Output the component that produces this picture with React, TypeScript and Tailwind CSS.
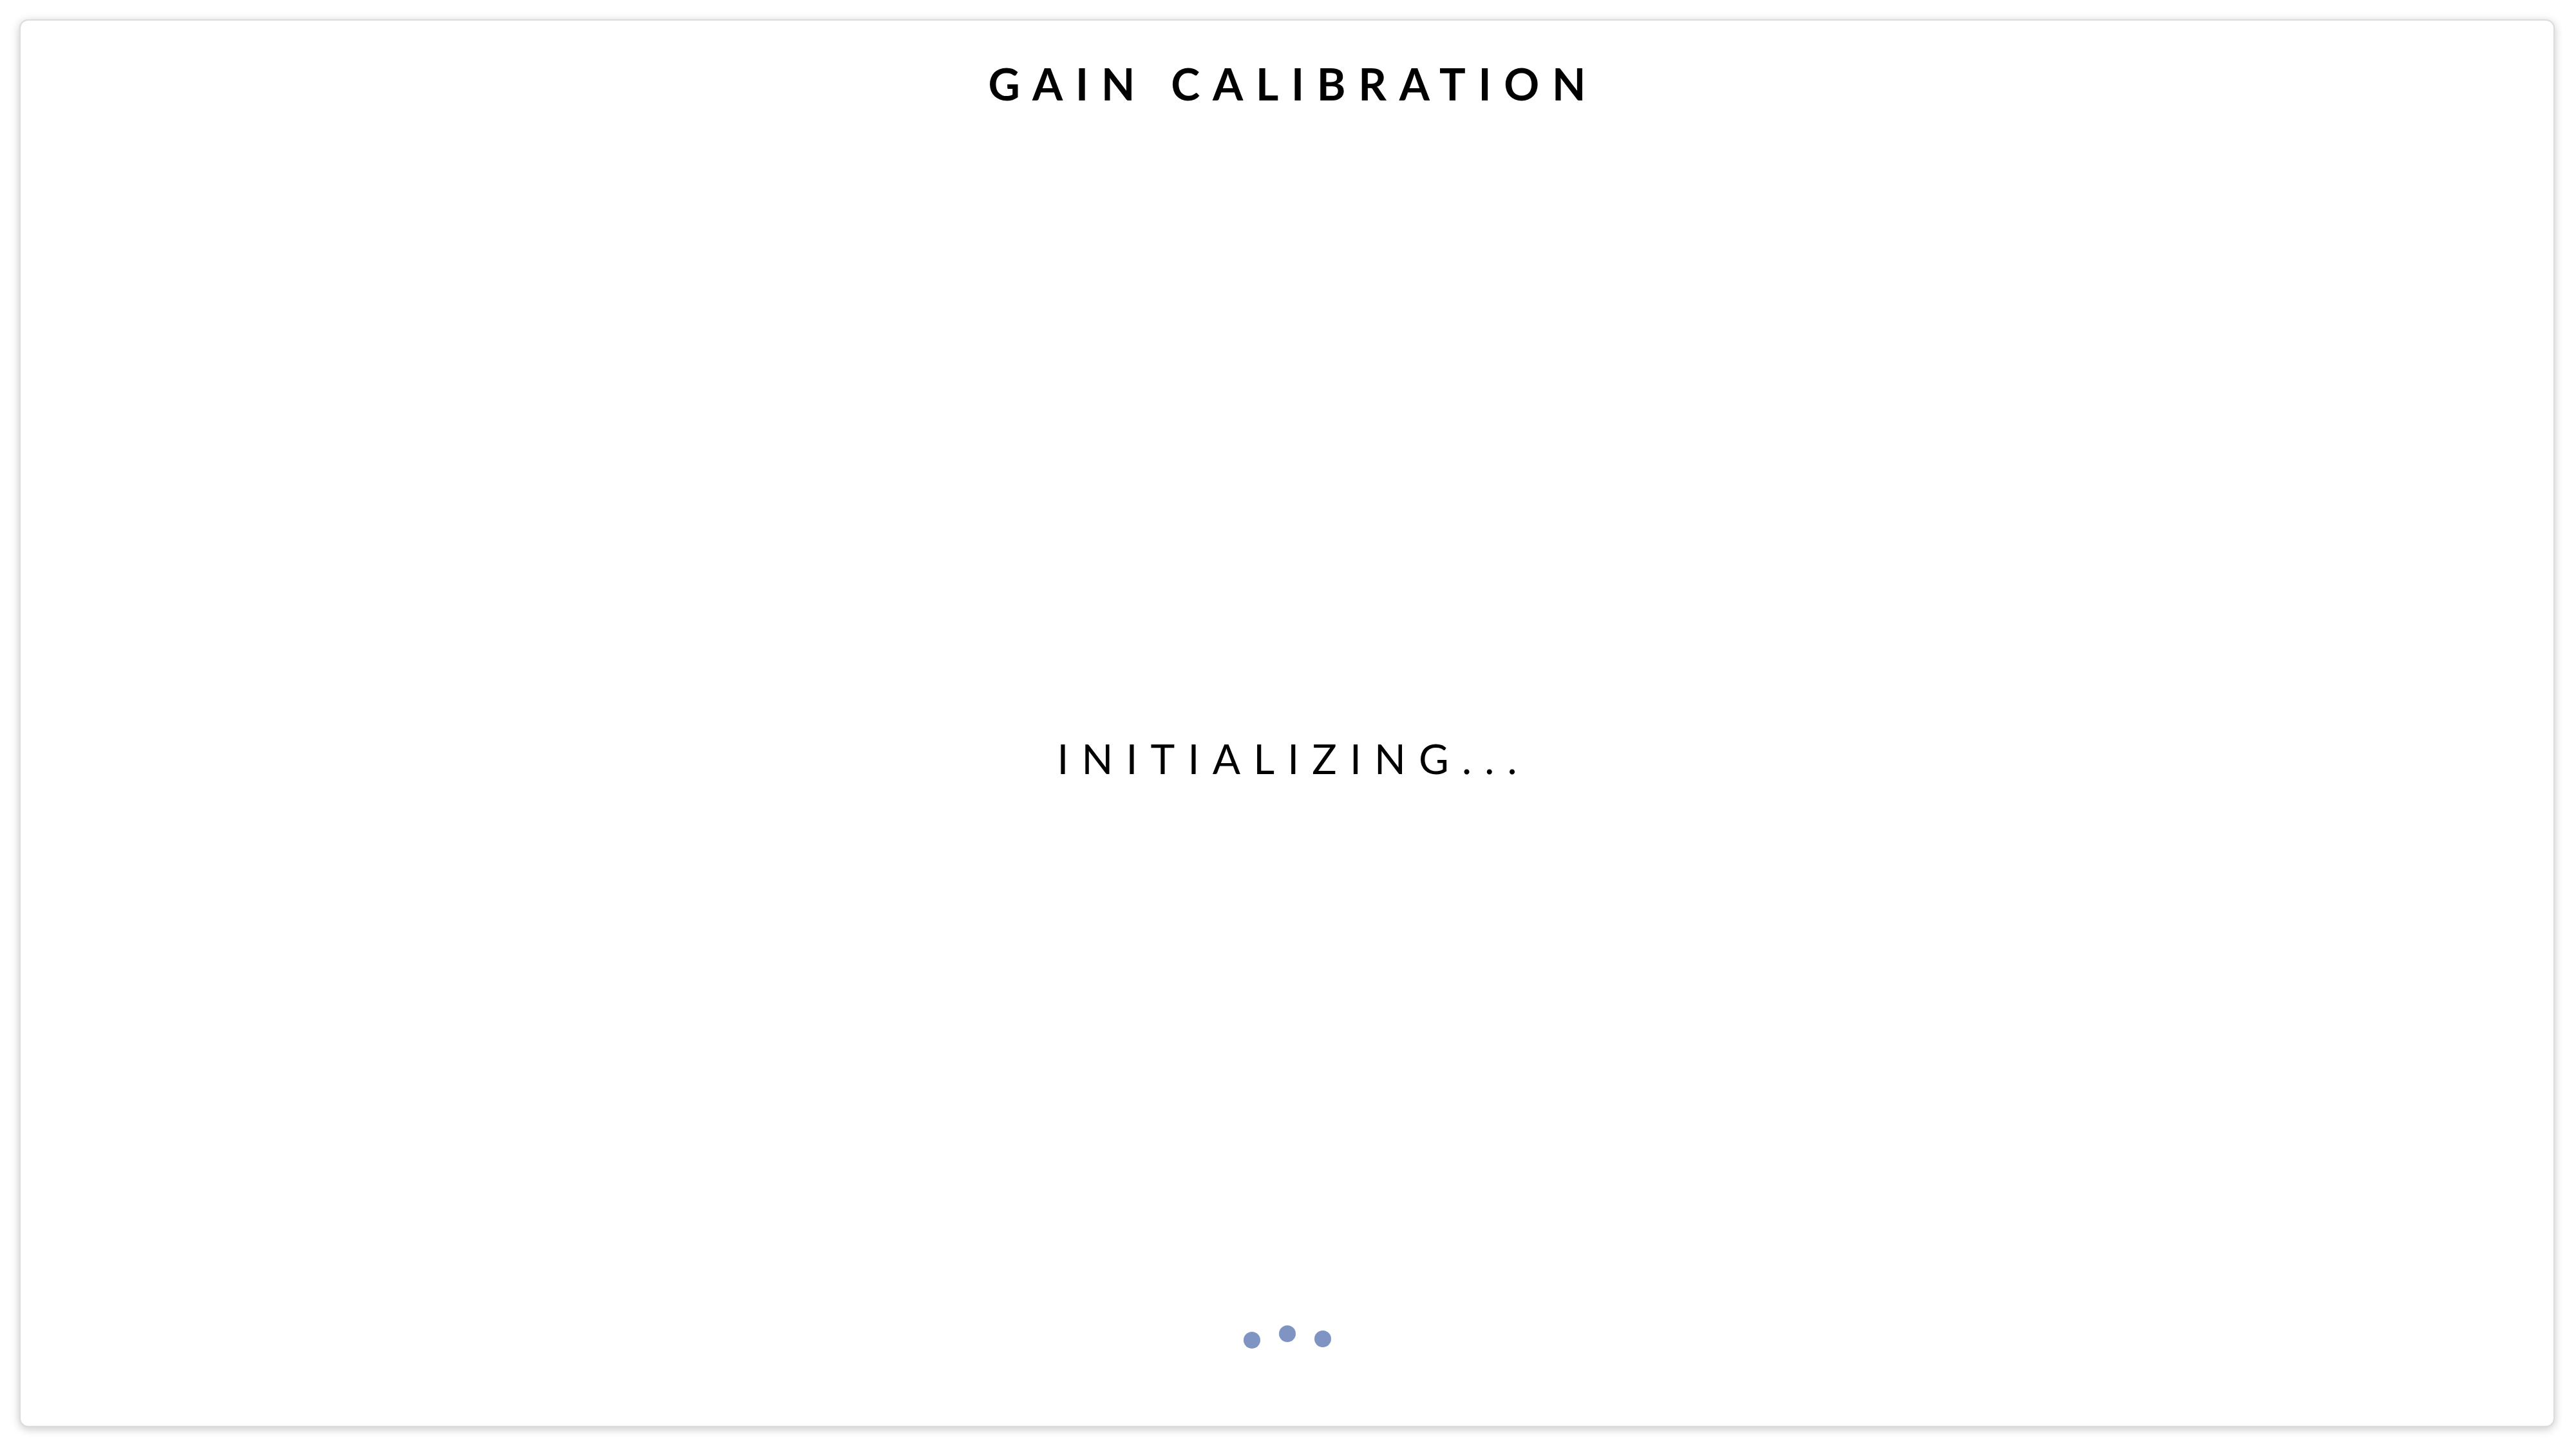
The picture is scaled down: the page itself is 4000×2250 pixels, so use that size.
export default function App() {
  return (
    <div className="w-[4000px] h-[2250px] bg-white pt-[30px] pl-[30px] pr-[33px] pb-[34px]">
      <div className="h-full rounded-[14px] bg-white border-2 border-[#dcdcdc] shadow-[0_3px_14px_rgba(0,0,0,0.22)] flex flex-col">
        <div className="h-[196px] flex items-center justify-center">
          <h1 className="text-[68px] leading-none font-bold tracking-[0.29em] text-black pl-[0.29em] [font-family:Lato,'Liberation_Sans',sans-serif]">
            GAIN CALIBRATION
          </h1>
        </div>

        <div className="flex-1 flex items-center justify-center pt-[190px]">
          <p className="text-[64px] leading-none font-normal tracking-[0.315em] text-black pl-[0.315em] [font-family:Lato,'Liberation_Sans',sans-serif]">
            INITIALIZING...
          </p>
        </div>

        <div className="h-[276px] flex items-center justify-center">
          <div className="flex items-start gap-[29px]">
            <span className="mt-[10px] w-[26px] h-[26px] rounded-full bg-[#7f94c2]" />
            <span className="w-[26px] h-[26px] rounded-full bg-[#7f94c2]" />
            <span className="mt-[8px] w-[26px] h-[26px] rounded-full bg-[#7f94c2]" />
          </div>
        </div>
      </div>
    </div>
  )
}
